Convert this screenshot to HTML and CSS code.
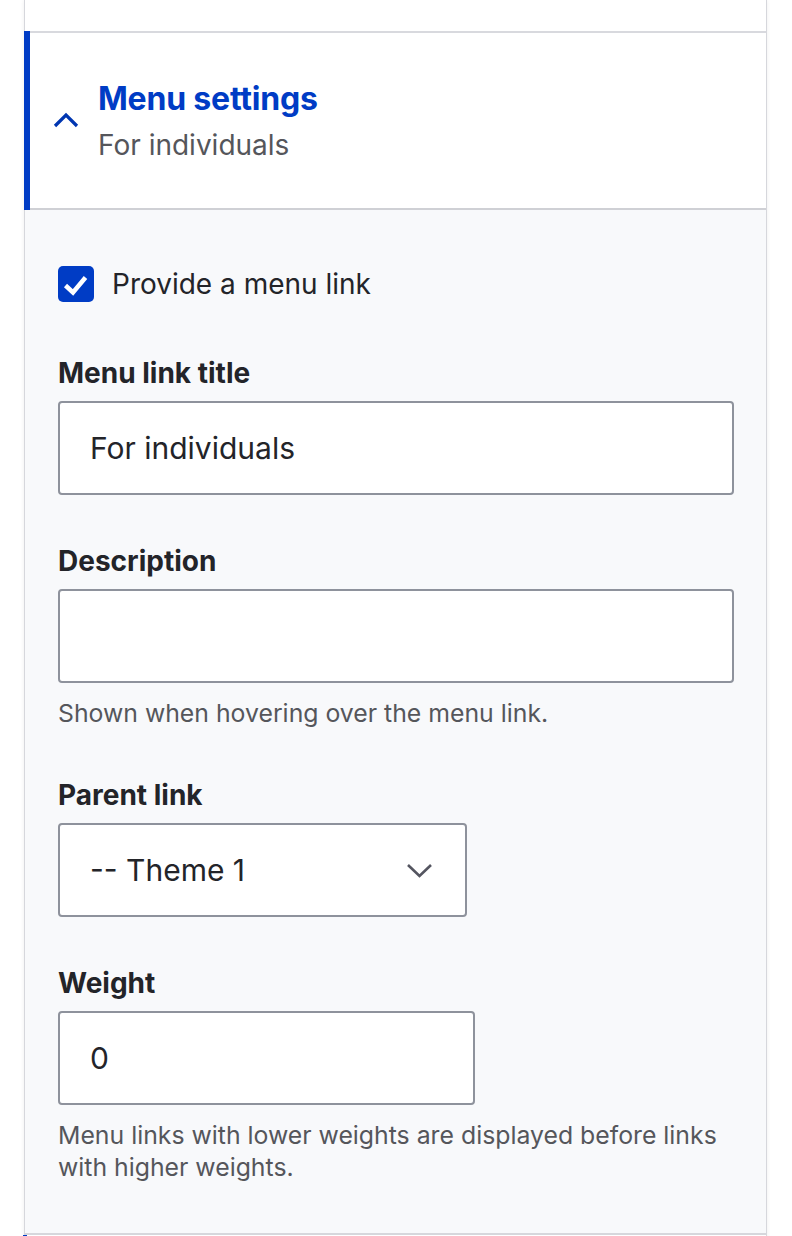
FILE: index.html
```html
<!DOCTYPE html>
<html lang="en">
<head>
<meta charset="utf-8">
<title>Menu settings</title>
<link rel="stylesheet" href="styles.css">
</head>
<body>
<div class="panel">
  <div class="prev-card"></div>
  <section class="details">
    <div class="summary">
      <svg class="summary-chevron" width="26" height="16" viewBox="0 0 26 16" aria-hidden="true">
        <path d="M2 14 L13 3 L24 14" fill="none" stroke="#0036b1" stroke-width="3.2"/>
      </svg>
      <div class="summary-text">
        <div class="summary-title">Menu settings</div>
        <div class="summary-sub">For individuals</div>
      </div>
    </div>
    <div class="details-body">
      <label class="check-row">
        <span class="checkbox">
          <svg width="36" height="36" viewBox="0 0 36 36" aria-hidden="true">
            <path d="M7.5 19.5 L15 26.5 L27.5 11.5" fill="none" stroke="#fff" stroke-width="4.5"/>
          </svg>
        </span>
        <span class="check-label">Provide a menu link</span>
      </label>

      <div class="field first">
        <div class="field-label">Menu link title</div>
        <div class="input wide">For individuals</div>
      </div>

      <div class="field">
        <div class="field-label">Description</div>
        <div class="input wide"></div>
        <div class="help">Shown when hovering over the menu link.</div>
      </div>

      <div class="field">
        <div class="field-label">Parent link</div>
        <div class="input select">
          <span>-- Theme 1</span>
          <svg class="select-arrow" width="27" height="15" viewBox="0 0 27 15" aria-hidden="true">
            <path d="M2 2 L13.5 13 L25 2" fill="none" stroke="#545560" stroke-width="2.6"/>
          </svg>
        </div>
      </div>

      <div class="field">
        <div class="field-label">Weight</div>
        <div class="input narrow">0</div>
        <div class="help">Menu links with lower weights are displayed before links with higher weights.</div>
      </div>
    </div>
  </section>
  <div class="next-card"></div>
</div>
</body>
</html>
```

FILE: styles.css
```css
html, body {
  margin: 0;
  padding: 0;
  background: #ffffff;
}

body {
  font-family: Inter, "Noto Sans", "Liberation Sans", sans-serif;
  color: #232429;
  height: 1236px;
  overflow: hidden;
}

.panel {
  margin-left: 24px;
  width: 742px;
  border-right: 1px solid #d6d7dc;
  box-shadow: 0 0 4px rgba(0, 0, 0, 0.07);
}

.prev-card {
  height: 31px;
  border-left: 1px solid #d6d7dc;
  background: #ffffff;
}

.summary {
  height: 179px;
  box-sizing: border-box;
  border-left: 6px solid #003cc5;
  background: #ffffff;
  box-shadow: inset 0 2px 0 #d8d9de, inset 0 -2px 0 #cfd0d5;
  display: flex;
  align-items: center;
  padding-left: 23px;
  padding-top: 2px;
}

.summary-chevron {
  display: block;
  margin-top: -3px;
}

.summary-text {
  margin-left: 19px;
}

.summary-title {
  font-size: 32px;
  line-height: 40px;
  font-weight: 700;
  color: #003cc5;
  letter-spacing: -0.2px;
}

.summary-sub {
  font-size: 28px;
  line-height: 40px;
  color: #55565b;
  margin-top: 6px;
}

.details-body {
  background: #f8f9fb;
  border-left: 1px solid #d6d7dc;
  border-bottom: 2px solid #d6d7dc;
  padding: 56px 32px 50px 33px;
}

.check-row {
  display: flex;
  align-items: center;
  height: 36px;
}

.checkbox {
  width: 36px;
  height: 36px;
  border-radius: 5px;
  background: #003cc5;
  display: block;
  flex: none;
}

.checkbox svg {
  display: block;
}

.check-label {
  margin-left: 18px;
  font-size: 28px;
  line-height: 36px;
}

.field {
  margin-top: 48px;
}

.field.first {
  margin-top: 53px;
}

.field-label {
  font-size: 28px;
  line-height: 36px;
  font-weight: 700;
  margin-bottom: 10px;
}

.input {
  box-sizing: border-box;
  height: 94px;
  border: 2px solid #8e929c;
  border-radius: 4px;
  background: #ffffff;
  padding-left: 30px;
  font-size: 30px;
  display: flex;
  align-items: center;
  color: #232429;
}

.wide {
  width: 676px;
}

.narrow {
  width: 417px;
}

.select {
  width: 409px;
  justify-content: space-between;
  padding-right: 32px;
}

.select-arrow {
  display: block;
}

.help {
  margin-top: 14px;
  font-size: 24.8px;
  line-height: 32px;
  color: #55565b;
  max-width: 676px;
}

.next-card {
  height: 4px;
  border-left: 4px solid #003cc5;
  margin-left: -1px;
}
```
